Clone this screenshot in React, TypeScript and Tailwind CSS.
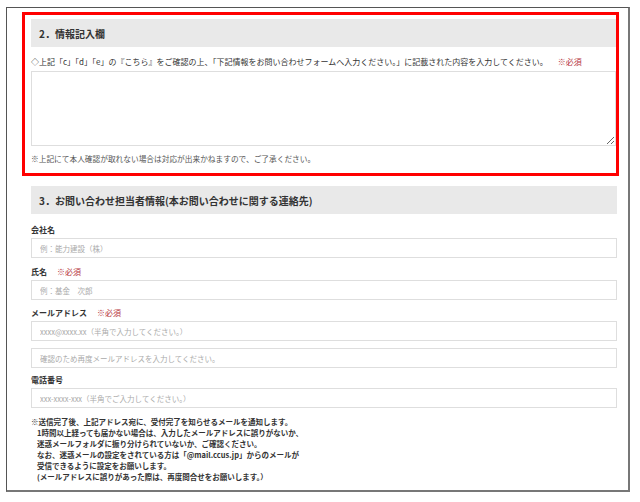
import React from 'react';

const Required = () => <span className="ml-[10px] text-[#b5323c] font-normal">※必須</span>;

const Field = ({ placeholder, className = '' }: { placeholder: string; className?: string }) => (
  <input
    type="text"
    placeholder={placeholder}
    className={`block w-full h-[20px] border border-[#dedede] bg-white px-[8px] text-[7.5px] text-[#333] placeholder:text-[#aaa] outline-none ${className}`}
  />
);

const App = () => {
  return (
    <div
      className="w-[640px] h-[502px] bg-white pt-[7px] pl-[6px] text-[#333]"
      style={{ fontFamily: '"Noto Sans CJK JP", "Noto Sans", sans-serif' }}
    >
      <div className="w-[624px] h-[485px] border-t border-l border-[#555] border-r-2 border-b-2 border-r-[#777] border-b-[#777] pt-[4px] pl-[15px] pr-[9px]">
        {/* section 2, highlighted */}
        <div className="border-[3px] border-[#ff0000] pt-[4px] pl-[6px] pb-[9px]">
          <div className="h-[28px] bg-[#e9e9e9] flex items-center pl-[8px] text-[10px] font-bold">2．情報記入欄</div>
          <p className="mt-[10px] leading-[10px] text-[8px] whitespace-nowrap">
            ◇上記「c」「d」「e」の『こちら』をご確認の上、「下記情報をお問い合わせフォームへ入力ください。」に記載された内容を入力してください。
            <Required />
          </p>
          <textarea className="block mt-[4px] w-full h-[75px] border border-[#dedede] bg-white outline-none" />
          <p className="mt-[8px] leading-[10px] text-[7.7px] text-[#555]">
            ※上記にて本人確認が取れない場合は対応が出来かねますので、ご了承ください。
          </p>
        </div>

        {/* section 3 */}
        <div className="ml-[9px] mr-[2px] mt-[10px]">
          <div className="h-[28px] bg-[#e9e9e9] flex items-center pl-[8px] text-[10px] font-bold">
            3．お問い合わせ担当者情報(本お問い合わせに関する連絡先)
          </div>

          <div className="mt-[11px] leading-[10px] text-[8px] font-bold">会社名</div>
          <Field className="mt-[3px]" placeholder="例：能力建設（株）" />

          <div className="mt-[9px] leading-[10px] text-[8px] font-bold">
            氏名<Required />
          </div>
          <Field className="mt-[3px]" placeholder="例：基金　次郎" />

          <div className="mt-[8px] leading-[10px] text-[8px] font-bold">
            メールアドレス<Required />
          </div>
          <Field className="mt-[3px]" placeholder="xxxx@xxxx.xx（半角で入力してください。）" />
          <Field className="mt-[7px]" placeholder="確認のため再度メールアドレスを入力してください。" />

          <div className="mt-[7px] leading-[10px] text-[8px] font-bold">電話番号</div>
          <Field className="mt-[3px]" placeholder="xxx-xxxx-xxx（半角でご入力してください。）" />

          <div className="mt-[8px] text-[7.5px] leading-[11px] font-bold text-[#333]">
            <p>※送信完了後、上記アドレス宛に、受付完了を知らせるメールを通知します。</p>
            <div className="pl-[6px]">
              <p>1時間以上経っても届かない場合は、入力したメールアドレスに誤りがないか、</p>
              <p>迷惑メールフォルダに振り分けられていないか、ご確認ください。</p>
              <p>なお、迷惑メールの設定をされている方は「@mail.ccus.jp」からのメールが</p>
              <p>受信できるように設定をお願いします。</p>
              <p>(メールアドレスに誤りがあった際は、再度問合せをお願いします。）</p>
            </div>
          </div>
        </div>
      </div>
    </div>
  );
};

export default App;
